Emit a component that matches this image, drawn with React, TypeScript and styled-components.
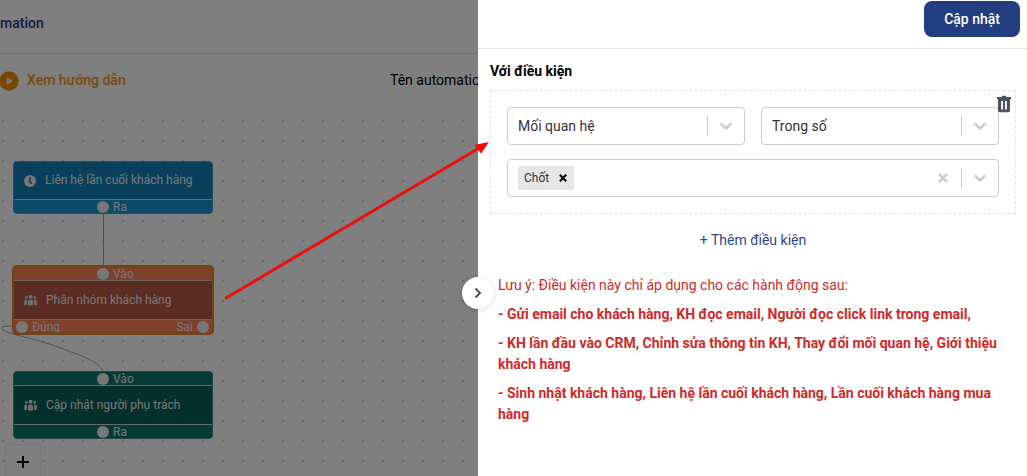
import React from "react";
import styled, { createGlobalStyle } from "styled-components";

const Global = createGlobalStyle`
  *, *::before, *::after { box-sizing: border-box; }
  body { margin: 0; background: #fff; font: 400 14px/21px Roboto, "Noto Sans", sans-serif; color: #111; }
  button, select { font: inherit; }
  button { cursor: pointer; border: 0; padding: 0; background: none; }
  h1, h2, p { margin: 0; font-size: 14px; }
`;

const Page = styled.div`
  position: relative;
  display: grid;
  grid-template-columns: 478px minmax(0, 1fr);
  min-height: 100vh;
  overflow: hidden;
`;

const Editor = styled.section`
  position: relative;
  display: flex;
  flex-direction: column;
  overflow: hidden;
`;

const Backdrop = styled.div`
  position: absolute;
  inset: 0;
  background: rgba(0, 0, 0, 0.5);
`;

const EditorHeader = styled.header`
  height: 54px;
  padding-top: 13px;
  border-bottom: 1px solid #e0e0e0;
`;

const EditorTitle = styled.h1`
  font-weight: 500;
  color: #233d7d;
`;

const Toolbar = styled.div`
  display: flex;
  align-items: center;
  justify-content: space-between;
  height: 53px;
  white-space: nowrap;
`;

const GuideLink = styled.a`
  display: flex;
  align-items: center;
  gap: 8px;
  font-weight: 500;
  color: #f59211;
  text-decoration: none;
`;

const NameLabel = styled.span`
  width: 88px;
  color: #000;
`;

const Canvas = styled.div`
  position: relative;
  flex: 1;
  min-height: 369px;
  background: radial-gradient(circle, #d4d4d4 1px, transparent 1px) -7px 4px / 20px 20px;
`;

const Edges = styled.svg`
  position: absolute;
  inset: 0;
  fill: none;
  stroke: #a0a0a0;
`;

const NodeBox = styled.article<{ $top: number; $main: string; $port: string; $line: string; $selected?: boolean }>`
  position: absolute;
  left: 13px;
  top: ${(p) => p.$top}px;
  width: 200px;
  border: 1px solid ${(p) => p.$line};
  border-radius: 4px;
  box-shadow: ${(p) => (p.$selected ? `0 0 0 1px ${p.$line}` : "none")};
  overflow: hidden;
  color: #eee;
  background: ${(p) => p.$main};
  --port: ${(p) => p.$port};
`;

const Ports = styled.div<{ $edge: "top" | "bottom"; $split?: boolean }>`
  display: flex;
  align-items: center;
  justify-content: ${(p) => (p.$split ? "space-between" : "flex-start")};
  height: 14px;
  padding: ${(p) => (p.$split ? "0 3px 0 2px" : "0 0 0 83px")};
  background: var(--port);
  border-${(p) => (p.$edge === "top" ? "bottom" : "top")}: 1px solid #d4d4d4;
  font-size: 12px;
  line-height: 14px;
`;

const NodeMain = styled.div`
  display: flex;
  align-items: center;
  gap: 9px;
  height: 37px;
  padding-left: 10px;
  font-size: 12px;
  white-space: nowrap;

  ${Ports} + & {
    height: 38px;
  }
`;

const Port = styled.span<{ $reverse?: boolean }>`
  display: flex;
  flex-direction: ${(p) => (p.$reverse ? "row-reverse" : "row")};
  align-items: center;
  gap: 4px;
  &::before {
    content: "";
    width: 12px;
    height: 12px;
    border-radius: 50%;
    background: #eee;
  }
`;

const ZoomIn = styled.button`
  position: absolute;
  left: 5px;
  top: 337px;
  display: grid;
  place-items: center;
  width: 36px;
  height: 36px;
  border: 1px solid #eee;
  background: #fff;
`;

const Drawer = styled.aside`
  position: relative;
  background: #fff;
`;

const DrawerHeader = styled.header`
  display: flex;
  justify-content: flex-end;
  height: 49px;
  padding: 1px 7px 0 0;
  border-bottom: 1px solid #e5e5e5;
`;

const SubmitButton = styled.button`
  height: 36px;
  padding: 0 20px;
  border-radius: 8px;
  background: #233e80;
  color: #fff;
  font-weight: 500;
`;

const DrawerBody = styled.div`
  padding: 12px 11px 12px 12px;
`;

const SectionTitle = styled.h2`
  font-weight: 700;
  color: #000;
`;

const ConditionGroup = styled.div`
  position: relative;
  display: grid;
  grid-template-columns: 1fr 1fr;
  gap: 14px 16px;
  margin-top: 8px;
  padding: 16px;
  border: 1px dashed #e2e2e2;
`;

const DeleteButton = styled.button`
  position: absolute;
  top: 4px;
  right: 3px;
  display: flex;
`;

const Control = styled.div<{ $wide?: boolean }>`
  display: flex;
  align-items: center;
  height: 38px;
  border: 1px solid #ccc;
  border-radius: 4px;
  color: #ccc;
  grid-column: ${(p) => (p.$wide ? "1 / -1" : "auto")};
`;

const Picker = styled.select`
  flex: 1;
  min-width: 0;
  height: 100%;
  padding: 0 10px;
  border: 0;
  appearance: none;
  background: none;
  color: #333;
`;

const Arrow = styled.span`
  display: grid;
  place-items: center;
  width: 37px;
  height: 20px;
  border-left: 1px solid #ccc;
`;

const Values = styled.div`
  flex: 1;
  padding-left: 10px;
`;

const Chip = styled.span`
  display: inline-flex;
  align-items: center;
  gap: 10px;
  height: 24px;
  padding: 0 7px 0 6px;
  border-radius: 2px;
  background: #e6e6e6;
  color: #333;
  font-size: 12px;
  vertical-align: middle;
`;

const IconButton = styled.button<{ $pad?: number }>`
  display: flex;
  padding: 0 ${(p) => p.$pad ?? 0}px;
  color: inherit;
`;

const AddButton = styled.button`
  display: block;
  margin: 16px auto 0;
  color: #2c4a85;
`;

const Notes = styled.div`
  display: grid;
  gap: 8px;
  margin-top: 24px;
  padding: 0 8px;
  color: #cf2a2a;
`;

const NoteItem = styled.p`
  font-weight: 700;
`;

const CollapseButton = styled.button`
  position: absolute;
  left: -16px;
  top: 277px;
  display: grid;
  place-items: center;
  width: 32px;
  height: 32px;
  border-radius: 50%;
  background: #fff;
  box-shadow: 0 1px 5px rgba(0, 0, 0, 0.16);
`;

const Pointer = styled.svg`
  position: absolute;
  left: 0;
  top: 0;
  pointer-events: none;
`;

const Chevron = () => (
  <svg width="14" height="10" viewBox="0 0 14 10" fill="none" stroke="#ccc" strokeWidth="2.5" strokeLinecap="round" strokeLinejoin="round">
    <path d="M2.300 3 7 7.500 11.700 3" />
  </svg>
);

const Cross = ({ size, color }: { size: number; color: string }) => (
  <svg width={size} height={size} viewBox="0 0 10 10" stroke={color} strokeWidth="2.500">
    <path d="M1 1 9 9M9 1 1 9" />
  </svg>
);

const People = () => (
  <svg width="13" height="12" viewBox="0 0 13 12" fill="#ddd">
    <circle cx="6.500" cy="2.700" r="2" />
    <circle cx="2.400" cy="3.400" r="1.300" />
    <circle cx="10.600" cy="3.400" r="1.300" />
    <path d="M3.900 11.500V8.200a2.600 2.600 0 0 1 5.200 0v3.300zM.2 11V7.600a2 2 0 0 1 3-1.900Q2.900 6.800 2.900 8v3zM12.800 11V7.600a2 2 0 0 0-3-1.900q.3 1.100.3 2.300v3z" />
  </svg>
);

const Clock = () => (
  <svg width="12" height="12" viewBox="0 0 12 12">
    <circle cx="6" cy="6" r="6" fill="#eee" />
    <path d="M5.800 2.200v4.200l2.200 2.600" fill="none" stroke="#107fb4" strokeWidth="1.600" />
  </svg>
);

const Trash = () => (
  <svg width="16" height="18" viewBox="0 0 16 18" fill="#4a545e" fillRule="evenodd">
    <path d="M1 2h4.500L6.300.8h3.400l.8 1.200H15v2.200H1zM2 4.200h12v11.300a1.700 1.700 0 0 1-1.700 1.700H3.700A1.700 1.700 0 0 1 2 15.500zM5.200 6v8.500h1.800V6zM9 6v8.500h1.800V6z" />
  </svg>
);

function Select({ label, value }: { label: string; value: string }) {
  return (
    <Control>
      <Picker aria-label={label} defaultValue={value}>
        <option>{value}</option>
      </Picker>
      <Arrow><Chevron /></Arrow>
    </Control>
  );
}

const notes = [
  "- Gửi email cho khách hàng, KH đọc email, Người đọc click link trong email,",
  "- KH lần đầu vào CRM, Chỉnh sửa thông tin KH, Thay đổi mối quan hệ, Giới thiệu khách hàng",
  "- Sinh nhật khách hàng, Liên hệ lần cuối khách hàng, Lần cuối khách hàng mua hàng",
];

export default function App() {
  return (
    <>
      <Global />
      <Page>
        <Editor>
          <EditorHeader><EditorTitle>mation</EditorTitle></EditorHeader>
          <Toolbar>
            <GuideLink href="#guide">
              <svg width="19" height="20" viewBox="0 0 19 20">
                <circle cx="9" cy="10" r="9.700" fill="#f58f00" />
                <path d="M7.200 7.500v5l4.500-2.500z" fill="#eee" stroke="#eee" strokeWidth="1.500" strokeLinejoin="round" />
              </svg>
              Xem hướng dẫn
            </GuideLink>
            <NameLabel>Tên automation</NameLabel>
          </Toolbar>
          <Canvas>
            <Edges width="240" height="369" viewBox="0 107 240 369">
              <path d="M103.500 212V268M14 326C4 326 0 327 2 329C5 334 40 339 66 350C88 358 101 364 103 372" />
            </Edges>
            <NodeBox $top={54} $main="#107fb4" $port="#1894d4" $line="#4a9cc0">
              <NodeMain><Clock />Liên hệ lần cuối khách hàng</NodeMain>
              <Ports $edge="bottom"><Port>Ra</Port></Ports>
            </NodeBox>
            <NodeBox $top={159} $main="#b55844" $port="#ff8358" $line="#d98a20" $selected>
              <Ports $edge="top"><Port>Vào</Port></Ports>
              <NodeMain><People />Phân nhóm khách hàng</NodeMain>
              <Ports $edge="bottom" $split><Port>Đúng</Port><Port $reverse>Sai</Port></Ports>
            </NodeBox>
            <NodeBox $top={264} $main="#065e58" $port="#0a766c" $line="#4a9088">
              <Ports $edge="top"><Port>Vào</Port></Ports>
              <NodeMain><People />Cập nhật người phụ trách</NodeMain>
              <Ports $edge="bottom"><Port>Ra</Port></Ports>
            </NodeBox>
            <ZoomIn aria-label="Phóng to">
              <svg width="12" height="12" viewBox="0 0 12 12" stroke="#000" strokeWidth="2"><path d="M6 0V12M0 6H12" /></svg>
            </ZoomIn>
          </Canvas>
          <Backdrop />
        </Editor>
        <Drawer>
          <DrawerHeader><SubmitButton>Cập nhật</SubmitButton></DrawerHeader>
          <DrawerBody>
            <SectionTitle>Với điều kiện</SectionTitle>
            <ConditionGroup>
              <Select label="Trường" value="Mối quan hệ" />
              <Select label="Phép so sánh" value="Trong số" />
              <Control $wide>
                <Values>
                  <Chip>Chốt<IconButton aria-label="Xóa Chốt"><Cross size={8} color="#000" /></IconButton></Chip>
                </Values>
                <IconButton $pad={13} aria-label="Xóa tất cả"><Cross size={10} color="#ccc" /></IconButton>
                <Arrow><Chevron /></Arrow>
              </Control>
              <DeleteButton aria-label="Xóa điều kiện"><Trash /></DeleteButton>
            </ConditionGroup>
            <AddButton>+ Thêm điều kiện</AddButton>
            <Notes>
              <p>Lưu ý: Điều kiện này chỉ áp dụng cho các hành động sau:</p>
              {notes.map((n) => <NoteItem key={n}>{n}</NoteItem>)}
            </Notes>
          </DrawerBody>
          <CollapseButton aria-label="Thu gọn">
            <svg width="8" height="12" viewBox="0 0 8 12" fill="none" stroke="#4a545e" strokeWidth="2"><path d="M1.500 1.500 6 6 1.500 10.500" /></svg>
          </CollapseButton>
        </Drawer>
        <Pointer width="500" height="310" viewBox="0 0 500 310">
          <path d="M226 298 480 147.500" stroke="#ea1010" strokeWidth="3" strokeLinecap="round" />
          <path d="M489 142 474.500 145 481 153.500Z" fill="#f80606" />
        </Pointer>
      </Page>
    </>
  );
}
